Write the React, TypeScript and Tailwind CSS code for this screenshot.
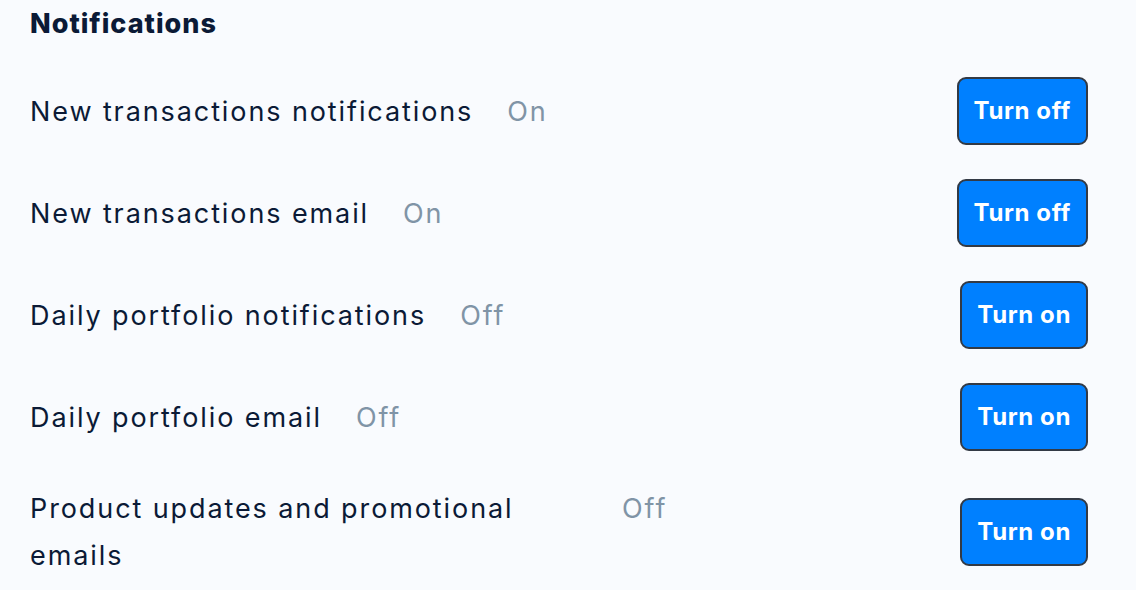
const rows = [
  { label: "New transactions notifications", on: true },
  { label: "New transactions email", on: true },
  { label: "Daily portfolio notifications", on: false },
  { label: "Daily portfolio email", on: false },
  { label: "Product updates and promotional emails", on: false },
];

export default function App() {
  return (
    <div
      className="min-h-[590px] w-[1136px] bg-[#f9fbfe] pl-[30px] pr-[48px] pt-[4px] text-[#0b1a36]"
      style={{ fontFamily: "Inter, 'Noto Sans', sans-serif" }}
    >
      <h2 className="text-[27px] font-extrabold leading-[40px] tracking-[1px]">Notifications</h2>
      <div className="mt-[33px] flex flex-col gap-[34px]">
        {rows.map((row) => (
          <div key={row.label} className="flex items-center justify-between">
            <div className="flex items-start gap-[34px]">
              <span className="max-w-[558px] text-[27px] leading-[47px] tracking-[1.9px]">{row.label}</span>
              <span className="text-[27px] leading-[47px] tracking-[1.9px] text-[#8094a6]">
                {row.on ? "On" : "Off"}
              </span>
            </div>
            <button className="h-[68px] rounded-[9px] border-2 border-[#333a45] bg-[#0080ff] px-[15px] text-[24px] font-bold tracking-[0.6px] text-white">
              {row.on ? "Turn off" : "Turn on"}
            </button>
          </div>
        ))}
      </div>
    </div>
  );
}
